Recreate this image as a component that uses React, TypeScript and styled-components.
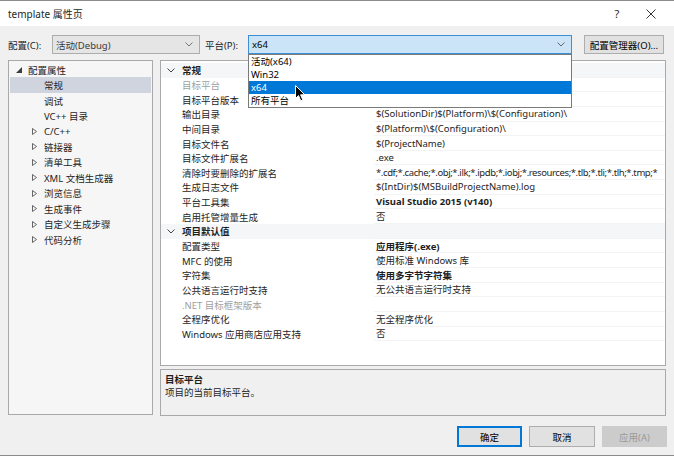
import styled, { createGlobalStyle } from "styled-components";

const GlobalStyle = createGlobalStyle`
  html, body {
    margin: 0;
    padding: 0;
    background: #f0f0f0;
  }
  body {
    font-family: "Noto Sans", "Noto Sans CJK SC", sans-serif;
    font-size: 9.5px;
    color: #1e1e1e;
  }
`;

const Window = styled.div`
  width: 674px;
  height: 456px;
  box-sizing: border-box;
  background: #f0f0f0;
  border-top: 1px solid #8c8c8c;
  border-bottom: 1px solid #8c8c8c;
  display: flex;
  flex-direction: column;
  position: relative;
  overflow: hidden;
`;

const TitleBar = styled.div`
  height: 25px;
  display: flex;
  align-items: center;
  padding: 0 10px 0 8px;
  background: #ffffff;
  font-size: 10px;
`;

const TitleText = styled.div`
  flex: 1;
`;

const TitleButton = styled.div`
  width: 26px;
  display: flex;
  justify-content: center;
  align-items: center;
  font-size: 11px;
  margin-left: 8px;
`;

const Toolbar = styled.div`
  display: flex;
  align-items: center;
  height: 19px;
  margin-top: 9px;
  padding: 0 10px 0 8px;
`;

const Label = styled.span<{ $w: number }>`
  width: ${(p) => p.$w}px;
  flex-shrink: 0;
`;

const Combo = styled.div<{ $w: number; $active?: boolean }>`
  position: relative;
  box-sizing: border-box;
  width: ${(p) => p.$w}px;
  height: 19px;
  display: flex;
  align-items: center;
  padding: 0 6px 0 3px;
  background: ${(p) => (p.$active ? "#cce4f7" : "#e5e5e5")};
  border: 1px solid ${(p) => (p.$active ? "#3d8fd6" : "#adadad")};
  color: ${(p) => (p.$active ? "#000" : "#3a3a3a")};
  margin-right: 5px;
`;

const ComboText = styled.span`
  flex: 1;
`;

const DropList = styled.div`
  position: absolute;
  left: -1px;
  right: -1px;
  top: 18px;
  background: #fff;
  border: 1px solid #7a7a7a;
  z-index: 5;
`;

const DropItem = styled.div<{ $sel?: boolean }>`
  height: 13px;
  line-height: 13px;
  padding-left: 2px;
  background: ${(p) => (p.$sel ? "#0078d7" : "transparent")};
  color: ${(p) => (p.$sel ? "#fff" : "#000")};
`;

const Cursor = styled.svg`
  position: absolute;
  left: 46px;
  top: 30px;
`;

const Button = styled.div<{ $w: number; $primary?: boolean; $disabled?: boolean }>`
  box-sizing: border-box;
  width: ${(p) => p.$w}px;
  height: ${(p) => (p.$primary !== undefined ? 21 : 19)}px;
  display: flex;
  align-items: center;
  justify-content: center;
  background: ${(p) => (p.$disabled ? "#cccccc" : "#e1e1e1")};
  border: ${(p) => (p.$primary ? "2px solid #0078d7" : p.$disabled ? "1px solid #cccccc" : "1px solid #adadad")};
  color: ${(p) => (p.$disabled ? "#9a9a9a" : "#000")};
`;

const Body = styled.div`
  display: flex;
  gap: 7px;
  margin-top: 6px;
  padding: 0 8px;
`;

const TreePanel = styled.div`
  box-sizing: border-box;
  width: 145px;
  height: 355px;
  background: #f6f6f6;
  border: 1px solid #a9a9a9;
  padding-top: 1px;
`;

const TreeRow = styled.div<{ $sel?: boolean; $indent: number }>`
  height: 15.45px;
  display: flex;
  align-items: center;
  margin: 0 1px;
  padding-left: ${(p) => p.$indent}px;
  background: ${(p) => (p.$sel ? "#cfd4de" : "transparent")};
`;

const Expander = styled.span`
  width: 12px;
  display: inline-flex;
  align-items: center;
`;

const RightCol = styled.div`
  width: 506px;
  display: flex;
  flex-direction: column;
  gap: 3px;
`;

const Grid = styled.div`
  box-sizing: border-box;
  height: 306px;
  background: #fff;
  border: 1px solid #a9a9a9;
  padding-top: 2px;
`;

const GridRow = styled.div<{ $cat?: boolean }>`
  height: 14.65px;
  display: grid;
  grid-template-columns: 213px 1fr;
  align-items: center;
  background: ${(p) => (p.$cat ? "#f5f6f7" : "#fff")};
`;

const NameCell = styled.div<{ $cat?: boolean; $dim?: boolean }>`
  display: flex;
  align-items: center;
  padding-left: ${(p) => (p.$cat ? 6 : 21)}px;
  font-weight: ${(p) => (p.$cat ? 700 : 400)};
  color: ${(p) => (p.$dim ? "#a0a0a0" : "#1e1e1e")};
  white-space: nowrap;
`;

const ValueCell = styled.div<{ $bold?: boolean; $tight?: boolean }>`
  height: 100%;
  display: flex;
  align-items: center;
  box-sizing: border-box;
  padding-left: 2px;
  border-bottom: 1px solid #f3f3f3;
  font-weight: ${(p) => (p.$bold ? 700 : 400)};
  letter-spacing: ${(p) => (p.$tight ? "-0.4px" : "0")};
  white-space: nowrap;
  overflow: hidden;
`;

const Chevron = styled.span`
  width: 15px;
  display: inline-flex;
  align-items: center;
`;

const Desc = styled.div`
  box-sizing: border-box;
  height: 47px;
  border: 1px solid #a9a9a9;
  padding: 3px 4px;
  line-height: 13px;
`;

const DescTitle = styled.div`
  font-weight: 700;
`;

const Footer = styled.div`
  display: flex;
  justify-content: flex-end;
  gap: 7px;
  margin-top: 10px;
  padding-right: 7px;
`;

const ChevronDown = ({ color = "#555" }: { color?: string }) => (
  <svg width="8" height="5" viewBox="0 0 8 5">
    <polyline points="0.5,0.5 4,4 7.5,0.5" fill="none" stroke={color} strokeWidth="1" />
  </svg>
);

const Collapsed = () => (
  <svg width="5" height="7" viewBox="0 0 5 7">
    <polygon points="0.5,0.5 4.5,3.5 0.5,6.5" fill="none" stroke="#555" strokeWidth="0.9" />
  </svg>
);

const Expanded = () => (
  <svg width="6" height="6" viewBox="0 0 6 6">
    <polygon points="6,0 6,6 0,6" fill="#3c3c3c" />
  </svg>
);

type Tree = { label: string; level: 0 | 1; kind: "open" | "closed" | "leaf"; sel?: boolean };

const tree: Tree[] = [
  { label: "配置属性", level: 0, kind: "open" },
  { label: "常规", level: 1, kind: "leaf", sel: true },
  { label: "调试", level: 1, kind: "leaf" },
  { label: "VC++ 目录", level: 1, kind: "leaf" },
  { label: "C/C++", level: 1, kind: "closed" },
  { label: "链接器", level: 1, kind: "closed" },
  { label: "清单工具", level: 1, kind: "closed" },
  { label: "XML 文档生成器", level: 1, kind: "closed" },
  { label: "浏览信息", level: 1, kind: "closed" },
  { label: "生成事件", level: 1, kind: "closed" },
  { label: "自定义生成步骤", level: 1, kind: "closed" },
  { label: "代码分析", level: 1, kind: "closed" },
];

type Prop = { name: string; value?: string; cat?: boolean; dim?: boolean; bold?: boolean; tight?: boolean };

const props: Prop[] = [
  { name: "常规", cat: true },
  { name: "目标平台", value: "", dim: true },
  { name: "目标平台版本", value: "" },
  { name: "输出目录", value: "$(SolutionDir)$(Platform)\\$(Configuration)\\" },
  { name: "中间目录", value: "$(Platform)\\$(Configuration)\\" },
  { name: "目标文件名", value: "$(ProjectName)" },
  { name: "目标文件扩展名", value: ".exe" },
  {
    name: "清除时要删除的扩展名",
    value: "*.cdf;*.cache;*.obj;*.ilk;*.ipdb;*.iobj;*.resources;*.tlb;*.tli;*.tlh;*.tmp;*",
    tight: true,
  },
  { name: "生成日志文件", value: "$(IntDir)$(MSBuildProjectName).log" },
  { name: "平台工具集", value: "Visual Studio 2015 (v140)", bold: true },
  { name: "启用托管增量生成", value: "否" },
  { name: "项目默认值", cat: true },
  { name: "配置类型", value: "应用程序(.exe)", bold: true },
  { name: "MFC 的使用", value: "使用标准 Windows 库" },
  { name: "字符集", value: "使用多字节字符集", bold: true },
  { name: "公共语言运行时支持", value: "无公共语言运行时支持" },
  { name: ".NET 目标框架版本", value: "", dim: true },
  { name: "全程序优化", value: "无全程序优化" },
  { name: "Windows 应用商店应用支持", value: "否" },
];

const platforms = ["活动(x64)", "Win32", "x64", "所有平台"];

const App = () => {
  return (
    <Window>
      <GlobalStyle />
      <TitleBar>
        <TitleText>template 属性页</TitleText>
        <TitleButton>?</TitleButton>
        <TitleButton>
          <svg width="10" height="10" viewBox="0 0 10 10">
            <path d="M0.5 0.5 L9.5 9.5 M9.5 0.5 L0.5 9.5" stroke="#333" strokeWidth="1" />
          </svg>
        </TitleButton>
      </TitleBar>

      <Toolbar>
        <Label $w={44}>配置(C):</Label>
        <Combo $w={148}>
          <ComboText>活动(Debug)</ComboText>
          <ChevronDown color="#777" />
        </Combo>
        <Label $w={43}>平台(P):</Label>
        <Combo $w={324} $active>
          <ComboText>x64</ComboText>
          <ChevronDown color="#666" />
          <DropList>
            {platforms.map((p) => (
              <DropItem key={p} $sel={p === "x64"}>
                {p}
              </DropItem>
            ))}
            <Cursor width="11" height="17" viewBox="0 0 11 17">
              <path
                d="M0.5 0.5 L0.5 13.5 L3.5 10.5 L5.8 15.8 L7.8 14.9 L5.6 9.8 L9.8 9.8 Z"
                fill="#000"
                stroke="#fff"
                strokeWidth="1"
              />
            </Cursor>
          </DropList>
        </Combo>
        <span style={{ width: 7 }} />
        <Button $w={80}>配置管理器(O)...</Button>
      </Toolbar>

      <Body>
        <TreePanel>
          {tree.map((t) => (
            <TreeRow key={t.label} $sel={t.sel} $indent={t.level === 0 ? 6 : 22}>
              <Expander>
                {t.kind === "open" && <Expanded />}
                {t.kind === "closed" && <Collapsed />}
              </Expander>
              {t.label}
            </TreeRow>
          ))}
        </TreePanel>

        <RightCol>
          <Grid>
            {props.map((p) => (
              <GridRow key={p.name} $cat={p.cat}>
                <NameCell $cat={p.cat} $dim={p.dim}>
                  {p.cat && (
                    <Chevron>
                      <ChevronDown color="#444" />
                    </Chevron>
                  )}
                  {p.name}
                </NameCell>
                <ValueCell $bold={p.bold} $tight={p.tight}>
                  {p.value}
                </ValueCell>
              </GridRow>
            ))}
          </Grid>
          <Desc>
            <DescTitle>目标平台</DescTitle>
            <div>项目的当前目标平台。</div>
          </Desc>
        </RightCol>
      </Body>

      <Footer>
        <Button $w={65} $primary>
          确定
        </Button>
        <Button $w={66} $primary={false}>
          取消
        </Button>
        <Button $w={65} $primary={false} $disabled>
          应用(A)
        </Button>
      </Footer>
    </Window>
  );
};

export default App;
